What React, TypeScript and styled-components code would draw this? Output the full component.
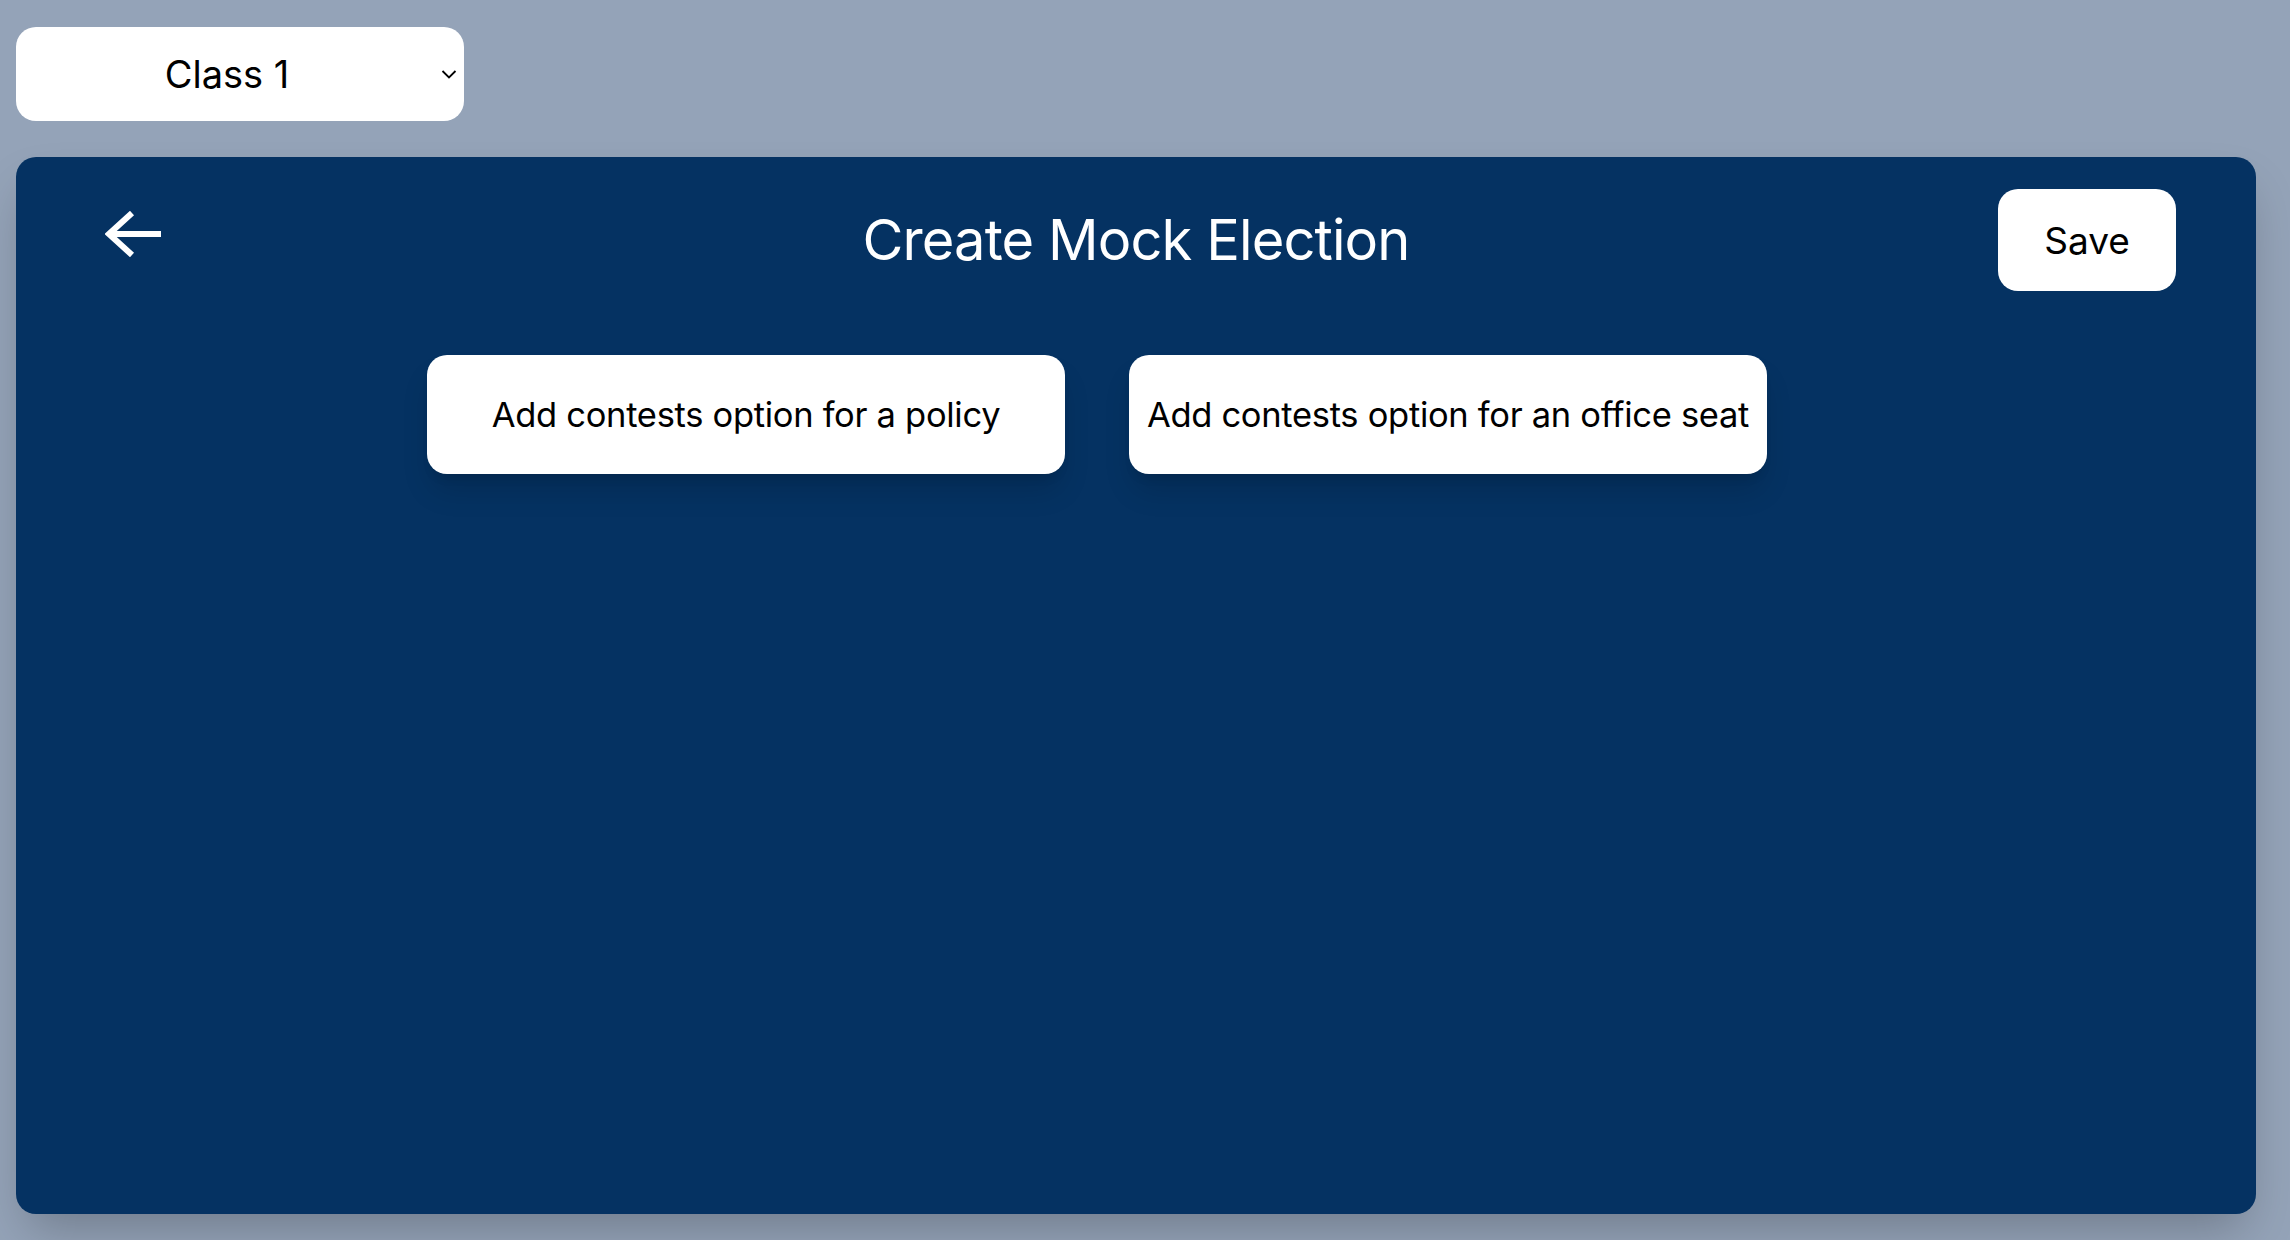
import React from "react";
import styled, { createGlobalStyle } from "styled-components";

const GlobalStyle = createGlobalStyle`
  html, body {
    margin: 0;
    padding: 0;
    background: #94a3b8;
    font-family: "Inter", "Noto Sans", sans-serif;
  }
  * { box-sizing: border-box; }
`;

const Page = styled.div`
  min-height: 100vh;
  display: flex;
  flex-direction: column;
  gap: 36px;
  padding: 27px 34px 26px 16px;
`;

const SelectWrap = styled.div`
  position: relative;
  width: 448px;
  height: 94px;
`;

const ClassSelect = styled.select`
  appearance: none;
  -webkit-appearance: none;
  width: 100%;
  height: 100%;
  border: none;
  border-radius: 20px;
  background: #ffffff;
  color: #000000;
  font-family: "Inter", sans-serif;
  font-size: 38px;
  text-align: center;
  text-align-last: center;
  padding: 0 40px 0 14px;
  outline: none;
`;

const Chevron = styled.svg`
  position: absolute;
  right: 7px;
  top: 42px;
  pointer-events: none;
`;

const Panel = styled.main`
  flex: 1;
  width: 2240px;
  background: #053262;
  border-radius: 20px;
  box-shadow: 0 25px 50px -12px rgba(0, 0, 0, 0.25);
  display: flex;
  flex-direction: column;
  padding: 32px 80px 0 80px;
`;

const Header = styled.header`
  display: grid;
  grid-template-columns: 1fr auto 1fr;
  align-items: center;
`;

const BackButton = styled.button`
  justify-self: start;
  align-self: start;
  margin-top: 22px;
  margin-left: 9px;
  border: none;
  background: transparent;
  padding: 0;
  display: flex;
  cursor: pointer;
`;

const Title = styled.h1`
  margin: 0;
  color: #ffffff;
  font-family: "Inter", sans-serif;
  font-weight: 400;
  font-size: 56px;
  letter-spacing: -0.9px;
  line-height: 1;
`;

const SaveButton = styled.button`
  justify-self: end;
  width: 178px;
  height: 102px;
  border: none;
  border-radius: 20px;
  background: #ffffff;
  color: #000000;
  font-family: "Inter", sans-serif;
  font-size: 37px;
  cursor: pointer;
`;

const OptionRow = styled.div`
  display: flex;
  justify-content: center;
  gap: 64px;
  margin-top: 64px;
  padding-right: 78px;
`;

const OptionButton = styled.button`
  width: 638px;
  height: 119px;
  border: none;
  border-radius: 20px;
  background: #ffffff;
  color: #000000;
  font-family: "Inter", sans-serif;
  font-size: 34.5px;
  letter-spacing: -0.3px;
  box-shadow: 0 20px 30px -4px rgba(0, 0, 0, 0.14), 0 8px 12px -6px rgba(0, 0, 0, 0.12);
  cursor: pointer;
`;

export default function App() {
  return (
    <>
      <GlobalStyle />
      <Page>
        <SelectWrap>
          <ClassSelect defaultValue="class1">
            <option value="class1">Class 1</option>
            <option value="class2">Class 2</option>
          </ClassSelect>
          <Chevron width="16" height="11" viewBox="0 0 16 11" fill="none">
            <path d="M1.5 2 L8 8.5 L14.5 2" stroke="#000" strokeWidth="1.8" />
          </Chevron>
        </SelectWrap>
        <Panel>
          <Header>
            <BackButton aria-label="Back">
              <svg width="56" height="46" viewBox="0 0 56 46" fill="none">
                <path d="M3 23 H56" stroke="#fff" strokeWidth="6" />
                <path d="M27 2 L4 23 L27 44" stroke="#fff" strokeWidth="6" />
              </svg>
            </BackButton>
            <Title>Create Mock Election</Title>
            <SaveButton>Save</SaveButton>
          </Header>
          <OptionRow>
            <OptionButton>Add contests option for a policy</OptionButton>
            <OptionButton>Add contests option for an office seat</OptionButton>
          </OptionRow>
        </Panel>
      </Page>
    </>
  );
}
